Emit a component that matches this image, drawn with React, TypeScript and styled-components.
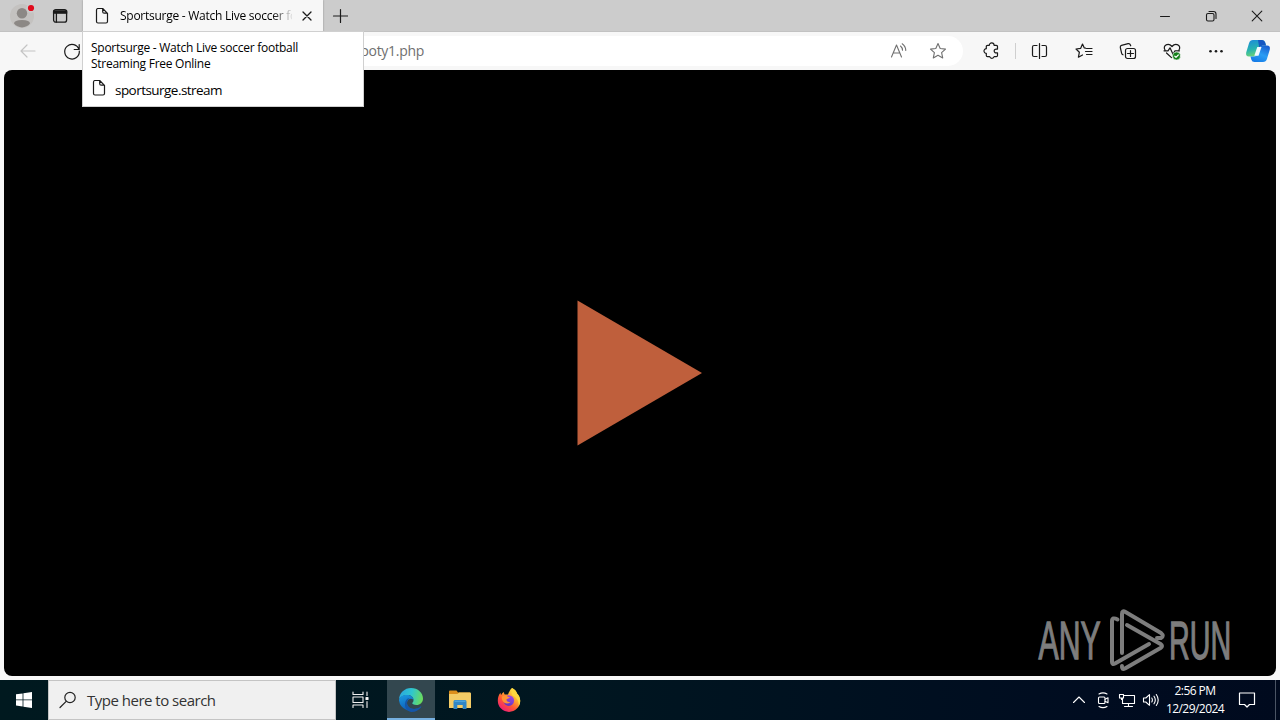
import React from "react";
import styled, { createGlobalStyle } from "styled-components";

const GlobalStyle = createGlobalStyle`
  * { box-sizing: border-box; }
  body { margin: 0; overflow: hidden; font-family: "Open Sans", "Noto Sans", sans-serif; }
  svg { display: block; flex: none; }
`;

const Desktop = styled.div`
  position: relative;
  display: flex;
  flex-direction: column;
  width: 1280px;
  height: 720px;
  background: #f7f7f7;
`;

const TitleBar = styled.header`
  display: flex;
  height: 32px;
  background: #cccccc;
  border-bottom: 1px solid #c2c2c2;
`;

const Slot = styled.div<{ $w: number; $h?: number; $bg?: string }>`
  display: flex;
  flex: none;
  align-items: center;
  justify-content: center;
  width: ${(p) => p.$w}px;
  height: ${(p) => (p.$h ? `${p.$h}px` : "100%")};
  background: ${(p) => p.$bg ?? "transparent"};
`;

const Tab = styled.div`
  display: flex;
  align-items: center;
  width: 240px;
  height: 32px;
  margin: 0 1px;
  padding-left: 11px;
  background: #f7f7f7;
  box-shadow: 0 0 2px rgba(0, 0, 0, 0.3);
`;

const TabTitle = styled.div`
  width: 172px;
  margin-left: 10px;
  overflow: hidden;
  white-space: nowrap;
  font-size: 12px;
  line-height: 16px;
  letter-spacing: -0.26px;
  color: #000;
  mask-image: linear-gradient(to right, #000 152px, transparent 174px);
`;

const WindowControls = styled.div`
  display: flex;
  margin-left: auto;
`;

const ToolBar = styled.div`
  display: flex;
  align-items: center;
  height: 38px;
  padding: 0 2px 0 6px;
  background: #f7f7f7;
`;

const AddressBar = styled.div`
  display: flex;
  align-items: center;
  width: 869px;
  height: 30px;
  padding-right: 6px;
  border-radius: 15px;
  background: #fff;
`;

const UrlText = styled.div`
  width: 330px;
  margin-right: auto;
  text-align: right;
  font-size: 14px;
  line-height: 20px;
  letter-spacing: -0.3px;
  color: #707070;
`;

const Divider = styled.div`
  width: 1px;
  height: 16px;
  margin: 0 2px 0 4px;
  background: #cfcfcf;
`;

const PageArea = styled.main`
  display: flex;
  height: 610px;
  padding: 0 4px 4px;
`;

const Player = styled.div`
  position: relative;
  flex: 1;
  display: flex;
  align-items: center;
  justify-content: center;
  border-radius: 8px;
  background: #000;
`;

const PlayTriangle = styled.svg`
  margin-bottom: 1px;
`;

const Watermark = styled.div`
  position: absolute;
  right: 45px;
  bottom: 0;
`;

const HoverCard = styled.aside`
  position: absolute;
  left: 82px;
  top: 31px;
  width: 282px;
  height: 76px;
  padding: 8px 9px 0 8px;
  background: #fff;
  border: 1px solid #d0d0d0;
`;

const CardTitle = styled.div`
  font-size: 12px;
  line-height: 16px;
  letter-spacing: -0.26px;
  white-space: pre;
  color: #000;
`;

const CardHost = styled.div`
  display: flex;
  align-items: center;
  height: 20px;
  margin-top: 6px;
  gap: 8px;
  font-size: 13.5px;
  letter-spacing: -0.54px;
  color: #000;
`;

const HostName = styled.span`
  padding-top: 3px;
`;

const TaskBar = styled.footer`
  display: flex;
  height: 40px;
  background: linear-gradient(to right, #00191f 0, #001620 45%, #000c20 85%, #000a1e 100%);
`;

const SearchBox = styled.div`
  display: flex;
  align-items: center;
  width: 288px;
  height: 40px;
  padding-left: 9px;
  gap: 9px;
  border: 1px solid #c4c4c4;
  background: #f0f0f0;
  font-size: 15px;
  letter-spacing: -0.5px;
  color: #333;
`;

const TaskButton = styled.div<{ $active?: boolean }>`
  display: flex;
  align-items: center;
  justify-content: center;
  width: 48px;
  height: 40px;
  margin-right: 1px;
  background: ${(p) => (p.$active ? "#33474f" : "transparent")};
  box-shadow: ${(p) => (p.$active ? "inset 0 -2px 0 #76b0e0" : "none")};
`;

const Tray = styled.div`
  display: flex;
  align-items: center;
  margin-left: auto;
`;

const Clock = styled.div`
  width: 64px;
  text-align: center;
  font-size: 12px;
  line-height: 18px;
  letter-spacing: -0.55px;
  color: #fff;
`;

const ShowDesktop = styled.div`
  width: 5px;
  height: 40px;
  margin-left: 8px;
  border-left: 1px solid #4a5464;
`;

type IconProps = {
  w?: number;
  h?: number;
  color?: string;
  sw?: number;
  children: React.ReactNode;
};

const Icon = ({ w = 20, h = 20, color = "#1a1a1a", sw = 1.1, children }: IconProps) => (
  <svg
    width={w}
    height={h}
    viewBox={`0 0 ${w} ${h}`}
    fill="none"
    stroke={color}
    strokeWidth={sw}
    strokeLinecap="round"
    strokeLinejoin="round"
  >
    {children}
  </svg>
);

const PageIcon = () => (
  <Icon w={16} h={18} sw={1.2}>
    <path d="M3.5 1.500h5.200l4.800 4.800v8.200q0 1.500-1.500 1.500H4q-1.500 0-1.500-1.500V3q0-1.500 1.500-1.500M8.700 1.700v3q0 1.500 1.500 1.500h3" />
  </Icon>
);

const ProfileIcon = () => (
  <Icon w={30} h={30}>
    <circle cx="15" cy="15" r="12" fill="#c4c2c0" stroke="none" />
    <g fill="#8c8885" stroke="none">
      <circle cx="15" cy="12.2" r="5.2" />
      <path d="M7 22.600q0-3.600 8-3.600t8 3.600q-3 3.800-8 3.800t-8-3.800z" />
    </g>
    <circle cx="24" cy="7" r="4.5" fill="#cccccc" stroke="none" />
    <circle cx="24" cy="7" r="3.100" fill="#e00b1c" stroke="none" />
  </Icon>
);

const WorkspaceIcon = () => (
  <Icon sw={1.3}>
    <rect x="3.6" y="3.6" width="13" height="12.6" rx="2.2" />
    <path d="M3.6 5h13v2.200h-13z" fill="#1a1a1a" />
    <path d="M6.400 7v9" />
  </Icon>
);

const CopilotIcon = () => (
  <svg width="26" height="26" viewBox="0 0 26 26">
    <defs>
      <linearGradient id="cpA" x1="0" y1="0" x2="0.3" y2="1">
        <stop offset="0" stopColor="#1b88dc" />
        <stop offset="0.6" stopColor="#27b3b0" />
        <stop offset="1" stopColor="#6bd377" />
      </linearGradient>
      <linearGradient id="cpB" x1="0.7" y1="0" x2="0.2" y2="1">
        <stop offset="0" stopColor="#1b62d2" />
        <stop offset="0.5" stopColor="#2a9df4" />
        <stop offset="1" stopColor="#1479e6" />
      </linearGradient>
    </defs>
    <path d="M8 2h9q2.500 0 3.200 2.500L21 7.500h-3.500q-2.400 0-3.200 2.500l-2 6q-.9 2.500-3.300 2.500H4Q.4 18.500 1.200 14.500L4 5.200Q5 2 8 2z" fill="url(#cpA)" />
    <path d="M13 2h4q2.500 0 3.200 2.500L21 7.500h-3.500q-2.400 0-3.200 2.500z" fill="#1757c2" />
    <path d="M18 24H9.500q-2.500 0-3.200-2.500L5.500 18.500H9q2.400 0 3.300-2.500l2-6q.8-2.500 3.200-2.500H22q3.600 0 2.800 4L22 20.800Q21 24 18 24z" fill="url(#cpB)" />
    <path d="M12.300 9h4.200l-3 8.800H9.300z" fill="#f2faff" />
  </svg>
);

const EdgeIcon = () => (
  <svg width="26" height="26" viewBox="0 0 26 26">
    <defs>
      <linearGradient id="edTop" x1="0" y1="0.3" x2="1" y2="0.5">
        <stop offset="0" stopColor="#2aa6de" />
        <stop offset="0.5" stopColor="#2fc6cf" />
        <stop offset="1" stopColor="#6bdc5c" />
      </linearGradient>
      <linearGradient id="edBody" x1="0" y1="0" x2="0.4" y2="1">
        <stop offset="0" stopColor="#1b9be0" />
        <stop offset="1" stopColor="#0c5cb8" />
      </linearGradient>
    </defs>
    <path d="M1 12.500A12 12 0 0 1 13 1c7 0 12 5 12 10.500 0 4-3 6.500-6.500 6.500-3 0-4.500-1.200-4.200-2 .8-.9 1.200-1.700 1.200-3 0-3-2.600-5-6-5-4 0-7.300 2-8.500 4.500z" fill="url(#edTop)" />
    <path d="M1 13.500C1 9.800 5 7.800 9.500 8c3.400 0 6 2.200 6 5-2-2.400-6.500-1-6.500 3 0 4.500 5.500 7.500 11.500 5A12 12 0 0 1 1 13.500z" fill="url(#edBody)" />
    <path d="M9 16c0 4 4.500 7 9.500 5.500 1.500-.4 3-1.100 4-2 .6-.4 1 .1.600.700A12 12 0 0 1 13 25c-4-1-6.500-4.500-6-8.500.3-2.800 2-5.200 4.500-5.500C10 12 9 14 9 16z" fill="#1556a8" />
  </svg>
);

const ExplorerIcon = () => (
  <svg width="24" height="22" viewBox="0 0 24 22">
    <path d="M1 2.500q0-1 1-1h6.500l1.500 2h12v5H1z" fill="#dc8f1c" />
    <path d="M1 5h8.500L11 3.500h11q1 0 1 1V19H1z" fill="#f4cc66" />
    <path d="M5.500 20v-7.500q0-1.500 1.500-1.500h10q1.500 0 1.500 1.500V20h-3.800v-4H9.300v4z" fill="#2f86c6" />
    <path d="M6.500 11.500h11V13h-11z" fill="#4ba3da" />
  </svg>
);

const FirefoxIcon = () => (
  <svg width="26" height="26" viewBox="0 0 26 26">
    <defs>
      <linearGradient id="ffBody" x1="0.85" y1="0.05" x2="0.2" y2="0.95">
        <stop offset="0" stopColor="#fff04a" />
        <stop offset="0.35" stopColor="#ffae2e" />
        <stop offset="0.65" stopColor="#ff5634" />
        <stop offset="1" stopColor="#ee1c78" />
      </linearGradient>
      <linearGradient id="ffGlobe" x1="0.8" y1="0" x2="0.3" y2="1">
        <stop offset="0" stopColor="#a64be0" />
        <stop offset="1" stopColor="#5a35c4" />
      </linearGradient>
    </defs>
    <path d="M16 1c3 1.500 4.500 3.500 5 5.500 2 2 3.200 4.300 3.200 7.200A11.200 11.200 0 0 1 1.800 13.700c0-3.500 1-6 2.700-8 0 .9.200 1.600.6 2.200C6 6.500 7 5.500 8 5c-.1 1 .1 1.800.7 2.600h3.300C13 5 14 2.500 16 1z" fill="url(#ffBody)" />
    <circle cx="12.800" cy="13.600" r="5.300" fill="url(#ffGlobe)" />
    <path d="M6 9.500c2-1.500 4.500-1.300 6 .2.900.3 1.800.3 1.800.8-.3 1-2.800 1.200-3.400 2 .1 2 2 3 4.300 2.200-1.300 2-5.700 2.600-7.700-.2C6 13 5.400 11 6 9.500z" fill="#ff9433" />
    <path d="M16 1c3 1.500 4.500 3.500 5 5.500 2 2 3.200 4.300 3.200 7.200 0 2-.6 4-1.500 5.500.5-4-1.200-8-4.700-9.700-3-1.700-3-5.500-2-8.500z" fill="#ffd83e" />
  </svg>
);

const AnyRunLogo = () => (
  <svg width="196" height="68" viewBox="0 0 196 68" fill="none">
    <g fill="#7d7d7d" stroke="#7d7d7d" strokeWidth="1.300" fontFamily="'Liberation Sans', sans-serif" fontSize="53">
      <text x="2" y="51.500" textLength="115" lengthAdjust="spacingAndGlyphs" transform="translate(2.500 0) scale(0.54 1)">
        ANY
      </text>
      <text x="0" y="51.500" textLength="115" lengthAdjust="spacingAndGlyphs" transform="translate(134 0) scale(0.54 1)">
        RUN
      </text>
    </g>
    <g stroke="#7d7d7d" strokeWidth="4" strokeLinecap="round" strokeLinejoin="round">
      <path d="M82.500 11.500q-5.500-3-5.500 2V54q0 3 3 1.500L114 36" />
      <path d="M87 45V6q0-4 3.500-2l35.500 21q3.500 3 0 5H122" />
      <path d="M92 17l33.500 19q3 2 0 4L90 60.500q-3.500 1.500-3-2.500" />
    </g>
  </svg>
);

const STAR = "M10 2.600l2.200 4.900 5.300.6-3.900 3.600 1.100 5.200-4.700-2.600-4.700 2.600 1.100-5.200L2.500 8.100l5.300-.6z";

export default function App() {
  return (
    <>
      <GlobalStyle />
      <Desktop>
        <TitleBar>
          <Slot $w={44} $h={31}><ProfileIcon /></Slot>
          <Slot $w={32} $h={32}><WorkspaceIcon /></Slot>
          <Slot $w={6} />
          <Tab>
            <PageIcon />
            <TabTitle>Sportsurge - Watch Live soccer football</TabTitle>
            <Slot $w={30}>
              <Icon w={12} h={12} sw={1.3}><path d="M2 2l8 8M10 2l-8 8" /></Icon>
            </Slot>
          </Tab>
          <Slot $w={32}>
            <Icon w={16} h={16} sw={1.2}><path d="M8.500 1.500v13M1.500 8h14" /></Icon>
          </Slot>
          <WindowControls>
            <Slot $w={46} $h={32}><Icon w={12} h={12} sw={1}><path d="M1.500 6.500h9" /></Icon></Slot>
            <Slot $w={46} $h={32}>
              <Icon w={12} h={12} sw={1.1}>
                <rect x="1.500" y="3.500" width="7.500" height="7.500" rx="1.500" />
                <path d="M4 1.500h4.500q2.500 0 2.500 2.500v4.500" />
              </Icon>
            </Slot>
            <Slot $w={46} $h={32}><Icon w={12} h={12} sw={1.1}><path d="M1.200 1.200l9.600 9.600M10.800 1.200l-9.600 9.600" /></Icon></Slot>
          </WindowControls>
        </TitleBar>

        <ToolBar>
          <Slot $w={44}>
            <Icon color="#c4c4c4" sw={1.2}><path d="M17 10H3M9 4l-6 6 6 6" /></Icon>
          </Slot>
          <Slot $w={44}>
            <Icon sw={1.2}><path d="M17 8.500A7.300 7.300 0 1 0 17.300 10M17.200 3.500v5h-5" /></Icon>
          </Slot>
          <AddressBar>
            <UrlText>ooty1.php</UrlText>
            <Slot $w={39}>
              <Icon color="#707070">
                <path d="M2.500 16L7.500 4l5 12M4.200 12h6.600M11.500 5q2 1.600 2 4.200M13.200 2.800q3.400 2.400 3.600 6.600" />
              </Icon>
            </Slot>
            <Slot $w={39}>
              <Icon color="#707070"><path d={STAR} /></Icon>
            </Slot>
          </AddressBar>
          <Slot $w={10} />
          <Slot $w={38}>
            <Icon sw={1.2}>
              <path d="M7.300 4.300H5.500q-1.200 0-1.200 1.200v2.200a2.300 2.300 0 1 0 0 4.600v2.200q0 1.200 1.200 1.200h2.200a2.300 2.300 0 0 0 4.400 0h2.200q1.200 0 1.200-1.200v-2.700h-1a1.900 1.900 0 1 1 0-3.700h1V5.500q0-1.200-1.200-1.200h-2.200a2.300 2.300 0 0 0-4.800 0z" />
            </Icon>
          </Slot>
          <Divider />
          <Slot $w={44}>
            <Icon sw={1.2}>
              <path d="M7 4.500H4Q2.500 4.500 2.500 6v8q0 1.500 1.500 1.500h3M12 4.500h3q1.500 0 1.500 1.500v8q0 1.500-1.500 1.500h-3M9.500 2.500v15" />
            </Icon>
          </Slot>
          <Slot $w={44}>
            <Icon sw={1.2}>
              <path d="M11.500 7.200l-1.200-.2L8.500 3 6.600 7.400l-4.600.6 3.400 3.200-1 5L8.500 14M12.500 7.500H18M11.500 10.500H18M12.500 13.500H18" />
            </Icon>
          </Slot>
          <Slot $w={44}>
            <Icon sw={1.2}>
              <rect x="7.500" y="7.500" width="10" height="10" rx="2" />
              <path d="M12.500 9.500v6M9.500 12.500h6M5 13.800q-1-.4-1.400-1.600L2.300 6.500q-.3-1.700 1.200-2.100l6.600-1.700q1.700-.4 2.300 1.300l.3.800" />
            </Icon>
          </Slot>
          <Slot $w={44}>
            <Icon sw={1.2}>
              <path d="M3 9Q1.200 5.600 4 3.900 7.300 2.300 10 5.500q2.700-3.200 6-1.600 2.800 1.700 1 5.100M4.500 12l5 4.600M2 9.800h4l2-3 3 6.500 2-3.500h4.500" />
              <circle cx="14.500" cy="15" r="4" fill="#14801a" stroke="#f7f7f7" strokeWidth="0.6" />
              <path d="M12.800 15.200l1.200 1.100 2.300-2.300" stroke="#fff" />
            </Icon>
          </Slot>
          <Slot $w={44}>
            <Icon>
              <g fill="#1a1a1a" stroke="none">
                <circle cx="4.500" cy="10.200" r="1.300" />
                <circle cx="10" cy="10.200" r="1.300" />
                <circle cx="15.500" cy="10.200" r="1.300" />
              </g>
            </Icon>
          </Slot>
          <Slot $w={40}><CopilotIcon /></Slot>
        </ToolBar>

        <PageArea>
          <Player>
            <PlayTriangle width="126" height="146" viewBox="0 0 126 146">
              <path d="M0.500 0.500L125 73 0.500 145.500z" fill="#bf5f3c" />
            </PlayTriangle>
            <Watermark><AnyRunLogo /></Watermark>
          </Player>
        </PageArea>

        <TaskBar>
          <Slot $w={48}>
            <svg width="16" height="16" viewBox="0 0 16 16" fill="#fff">
              <path d="M0 2.300l6.600-.9v6.100H0zM7.400 1.300L16 0v7.500H7.400zM0 8.300h6.600v6.100L0 13.500zM7.400 8.300H16V16l-8.600-1.300z" />
            </svg>
          </Slot>
          <SearchBox>
            <Icon color="#222" sw={1.2}>
              <circle cx="12" cy="7.500" r="5.200" />
              <path d="M8.200 11.300L2 17.500" />
            </Icon>
            Type here to search
          </SearchBox>
          <Slot $w={51}>
            <Icon color="#f0f0f0" sw={1.1}>
              <path d="M1 2v2.500h10V2M1 17.500V15h10v2.500M1 7h10v5.500H1zM15 2v3.500M15 11.500v6" />
              <rect x="14" y="7.500" width="2" height="2" fill="#fff" />
            </Icon>
          </Slot>
          <TaskButton $active><EdgeIcon /></TaskButton>
          <TaskButton><ExplorerIcon /></TaskButton>
          <TaskButton><FirefoxIcon /></TaskButton>
          <Tray>
            <Slot $w={24}><Icon w={14} h={14} color="#fff"><path d="M1.500 9.500L7 4l5.500 5.500" /></Icon></Slot>
            <Slot $w={24}>
              <Icon w={18} h={18} color="#fff">
                <rect x="4.500" y="6" width="6.500" height="6.500" rx="1" />
                <path d="M11 8.300l3-1.500v5l-3-1.500M5 3q4-2.300 8 0M5 15.500q4 2.300 8 0" />
              </Icon>
            </Slot>
            <Slot $w={24}>
              <Icon w={18} h={18} color="#fff">
                <path d="M6 4.500h10.500v8h-12V7.500M1.500 3.500h4v3.500h-4zM3.500 7v1.500M6.500 15.500h8M10.500 12.500v3" />
              </Icon>
            </Slot>
            <Slot $w={24}>
              <Icon w={18} h={18} color="#fff">
                <path d="M1.500 7h2.300l3.700-3.300v10.600L3.800 11H1.500zM9.800 7q1.200 2 0 4M12 5.200q2.600 3.800 0 7.600M14.300 3.500q3.800 5.500 0 11" />
              </Icon>
            </Slot>
            <Clock>2:56 PM<br />12/29/2024</Clock>
            <Slot $w={40}>
              <Icon color="#fff" sw={1.2}><path d="M2.500 3h15v11.500h-5L10 17l-2.500-2.500h-5z" /></Icon>
            </Slot>
            <ShowDesktop />
          </Tray>
        </TaskBar>

        <HoverCard>
          <CardTitle>{"Sportsurge - Watch Live soccer football\nStreaming Free Online"}</CardTitle>
          <CardHost><PageIcon /><HostName>sportsurge.stream</HostName></CardHost>
        </HoverCard>
      </Desktop>
    </>
  );
}
